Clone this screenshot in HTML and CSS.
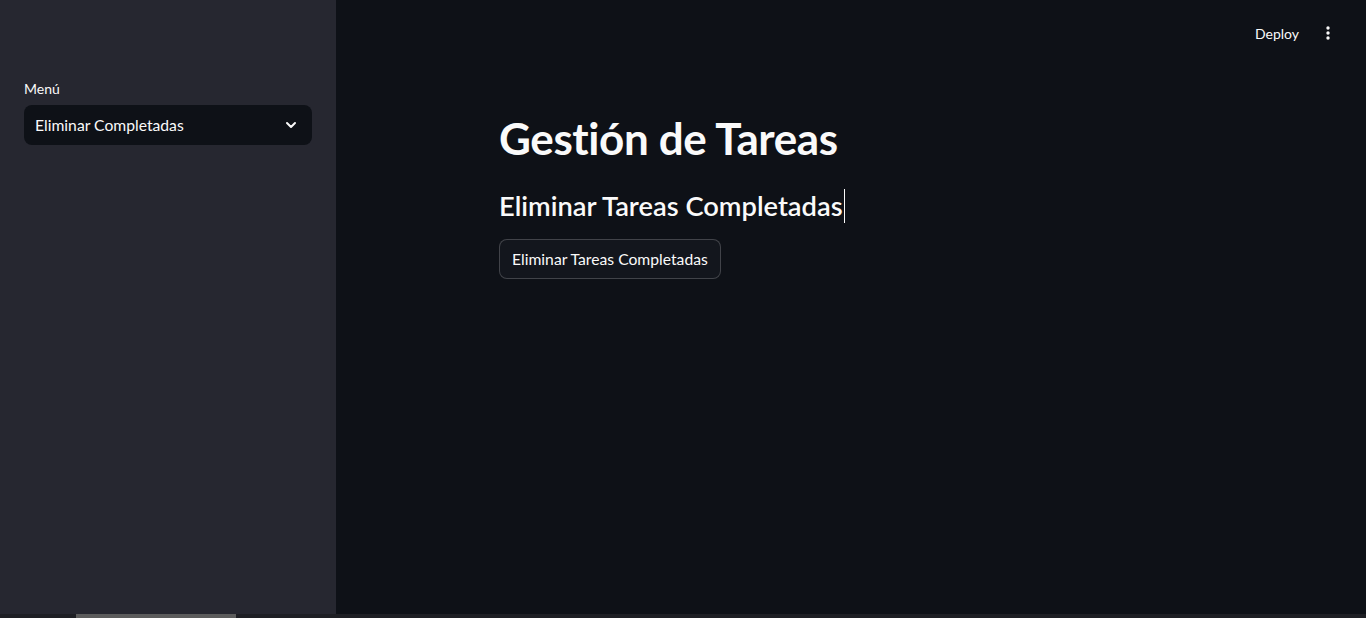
FILE: index.html
```html
<!DOCTYPE html>
<html lang="es">
<head>
<meta charset="utf-8">
<title>Gestión de Tareas</title>
<link rel="stylesheet" href="styles.css">
</head>
<body>
<div class="app">
  <aside class="sidebar">
    <div class="field">
      <label class="field-label">Menú</label>
      <div class="select">
        <span class="select-value">Eliminar Completadas</span>
        <svg class="chevron" width="16" height="16" viewBox="0 0 24 24"><path d="M6 9l6 6 6-6" fill="none" stroke="#fafafa" stroke-width="3" stroke-linecap="round" stroke-linejoin="round"/></svg>
      </div>
    </div>
  </aside>
  <main class="main">
    <header class="header">
      <span class="deploy">Deploy</span>
      <svg class="kebab" width="16" height="16" viewBox="0 0 16 16"><circle cx="8" cy="3" r="1.7" fill="#fafafa"/><circle cx="8" cy="8" r="1.7" fill="#fafafa"/><circle cx="8" cy="13" r="1.7" fill="#fafafa"/></svg>
    </header>
    <div class="block">
      <h1 class="title">Gestión de Tareas</h1>
      <h3 class="subheader">Eliminar Tareas Completadas<span class="caret"></span></h3>
      <button class="btn">Eliminar Tareas Completadas</button>
    </div>
  </main>
</div>
<div class="hscroll"><div class="hthumb"></div></div>
</body>
</html>
```

FILE: styles.css
```css
* { box-sizing: border-box; }
html, body { margin: 0; padding: 0; height: 100%; overflow: hidden; }
body {
  background: #0e1117;
  color: #fafafa;
  font-family: "Source Sans Pro", Lato, "Noto Sans", sans-serif;
  display: flex;
  flex-direction: column;
}
.app { display: flex; height: 614px; }
.sidebar {
  width: 336px;
  flex: none;
  background: #262730;
  padding: 80px 24px 0;
}
.field-label {
  display: block;
  font-size: 14px;
  line-height: 18px;
  margin-bottom: 7px;
}
.select {
  height: 40px;
  background: #0e1117;
  border-radius: 8px;
  display: flex;
  align-items: center;
  justify-content: space-between;
  padding: 0 13px 0 11px;
  font-size: 15.7px;
}
.chevron { display: block; }
.main { flex: 1; position: relative; }
.header {
  position: absolute;
  top: 0; right: 0;
  height: 66px;
  display: flex;
  align-items: center;
  padding-right: 30px;
  gap: 21px;
}
.deploy { font-size: 14px; }
.kebab { display: block; }
.block {
  width: 736px;
  margin: 0 auto;
  padding: 96px 16px 0;
}
.title {
  margin: 0;
  padding: 16px 0 23px;
  font-size: 44px;
  font-weight: 700;
  line-height: 1.2;
  letter-spacing: -0.4px;
}
.subheader {
  margin: 0;
  padding: 0 0 12px;
  font-size: 27.3px;
  font-weight: 600;
  line-height: 36px;
  display: flex;
  align-items: center;
}
.caret { display: inline-block; width: 1px; height: 34px; background: #fafafa; margin-left: 1px; }
.btn {
  margin-top: 3px;
  height: 40px;
  padding: 0 12px;
  background: #13161d;
  border: 1px solid rgba(250,250,250,0.2);
  border-radius: 8px;
  color: #fafafa;
  font-family: inherit;
  font-size: 15.7px;
}
.hscroll { height: 4px; background: #1e1f24; position: relative; }
.hthumb { position: absolute; left: 76px; width: 160px; top: 0; bottom: 0; background: #5c5c5c; }
```
